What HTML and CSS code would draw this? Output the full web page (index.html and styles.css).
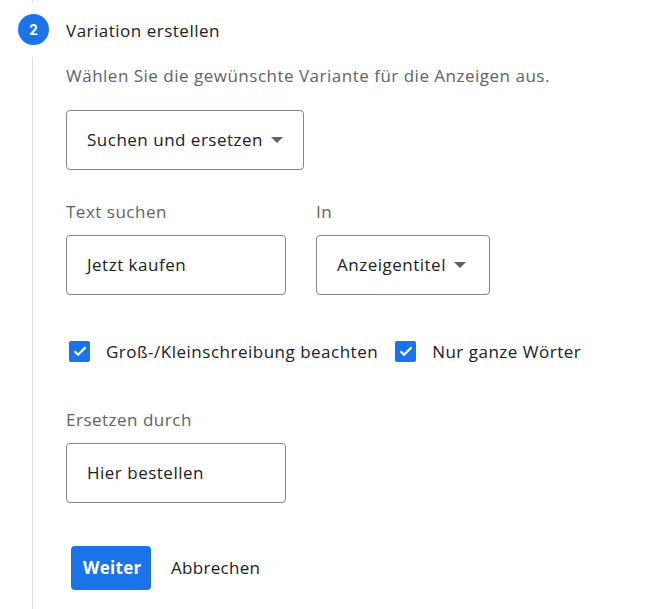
FILE: index.html
```html
<!DOCTYPE html>
<html lang="de">
<head>
<meta charset="utf-8">
<link rel="stylesheet" href="styles.css">
</head>
<body>
<div class="step">
  <div class="rail-head">
    <div class="stub"></div>
    <div class="num">2</div>
  </div>
  <div class="title">Variation erstellen</div>
  <div class="rail"></div>
  <div class="content">
    <p class="desc">Wählen Sie die gewünschte Variante für die Anzeigen aus.</p>
    <div class="select wide">Suchen und ersetzen <span class="arrow"></span></div>
    <div class="fields">
      <div class="field">
        <div class="label">Text suchen</div>
        <div class="input">Jetzt kaufen</div>
      </div>
      <div class="field">
        <div class="label">In</div>
        <div class="select narrow">Anzeigentitel <span class="arrow"></span></div>
      </div>
    </div>
    <div class="checks">
      <label class="check"><span class="box"><svg viewBox="0 0 20 20" width="20" height="20"><path d="M4.5 10.2l3.6 3.6 7.4-7.4" fill="none" stroke="#fff" stroke-width="2.2"/></svg></span>Groß-/Kleinschreibung beachten</label>
      <label class="check"><span class="box"><svg viewBox="0 0 20 20" width="20" height="20"><path d="M4.5 10.2l3.6 3.6 7.4-7.4" fill="none" stroke="#fff" stroke-width="2.2"/></svg></span>Nur ganze Wörter</label>
    </div>
    <div class="field replace">
      <div class="label">Ersetzen durch</div>
      <div class="input">Hier bestellen</div>
    </div>
    <div class="actions">
      <button class="primary">Weiter</button>
      <button class="text">Abbrechen</button>
    </div>
  </div>
</div>
</body>
</html>
```
FILE: styles.css
```css
html, body {
  margin: 0;
  background: #fff;
  font-family: "Open Sans", Roboto, sans-serif;
  color: #202124;
  font-size: 17px;
  letter-spacing: 0.5px;
}
.step {
  display: grid;
  grid-template-columns: 66px 1fr;
  grid-template-rows: 57px auto;
  height: 609px;
  overflow: hidden;
}
.stub {
  margin-left: 32px;
  width: 1px;
  height: 3px;
  background: #dadce0;
}
.num {
  margin: 11px 0 0 18px;
  width: 31px;
  height: 31px;
  border-radius: 50%;
  background: #1a73e8;
  color: #fff;
  font-weight: 700;
  font-size: 15px;
  letter-spacing: 0;
  font-family: Roboto, sans-serif;
  display: flex;
  align-items: center;
  justify-content: center;
}
.title {
  padding-top: 19px;
  line-height: 24px;
}
.rail {
  margin-left: 32px;
  width: 1px;
  background: #dadce0;
  height: 560px;
}
.content {
  padding-top: 7px;
}
.desc {
  margin: 0;
  line-height: 24px;
  color: #5f6368;
}
.select, .input {
  box-sizing: border-box;
  height: 60px;
  border: 1px solid #80868b;
  border-radius: 4px;
  display: flex;
  align-items: center;
  padding-left: 20px;
  padding-bottom: 1px;
}
.select.wide {
  margin-top: 22px;
  width: 238px;
}
.select.narrow {
  width: 174px;
}
.arrow {
  margin-left: 8px;
  width: 0;
  height: 0;
  border-left: 6px solid transparent;
  border-right: 6px solid transparent;
  border-top: 6px solid #5f6368;
}
.input {
  width: 220px;
}
.fields {
  display: flex;
  gap: 30px;
  margin-top: 30px;
}
.label {
  line-height: 24px;
  color: #5f6368;
  margin-bottom: 11px;
}
.checks {
  display: flex;
  gap: 14px;
  margin-top: 44px;
  height: 24px;
  align-items: center;
}
.check {
  display: flex;
  align-items: center;
  gap: 16px;
  padding-left: 3px;
}
.box {
  width: 21px;
  height: 21px;
  border-radius: 2px;
  background: #1a73e8;
  display: flex;
  align-items: center;
  justify-content: center;
}
.replace {
  margin-top: 45px;
}
.actions {
  display: flex;
  align-items: center;
  gap: 4px;
  margin-top: 43px;
  padding-left: 5px;
}
button {
  font-family: inherit;
  font-size: 17px;
  letter-spacing: 0.3px;
  border: none;
  height: 44px;
  border-radius: 4px;
  padding: 0 12px 1px;
  background: none;
  color: #202124;
}
.primary {
  background: #1a73e8;
  color: #fff;
  font-weight: 700;
  width: 80px;
}
.text {
  padding: 0 16px 1px;
}
```
